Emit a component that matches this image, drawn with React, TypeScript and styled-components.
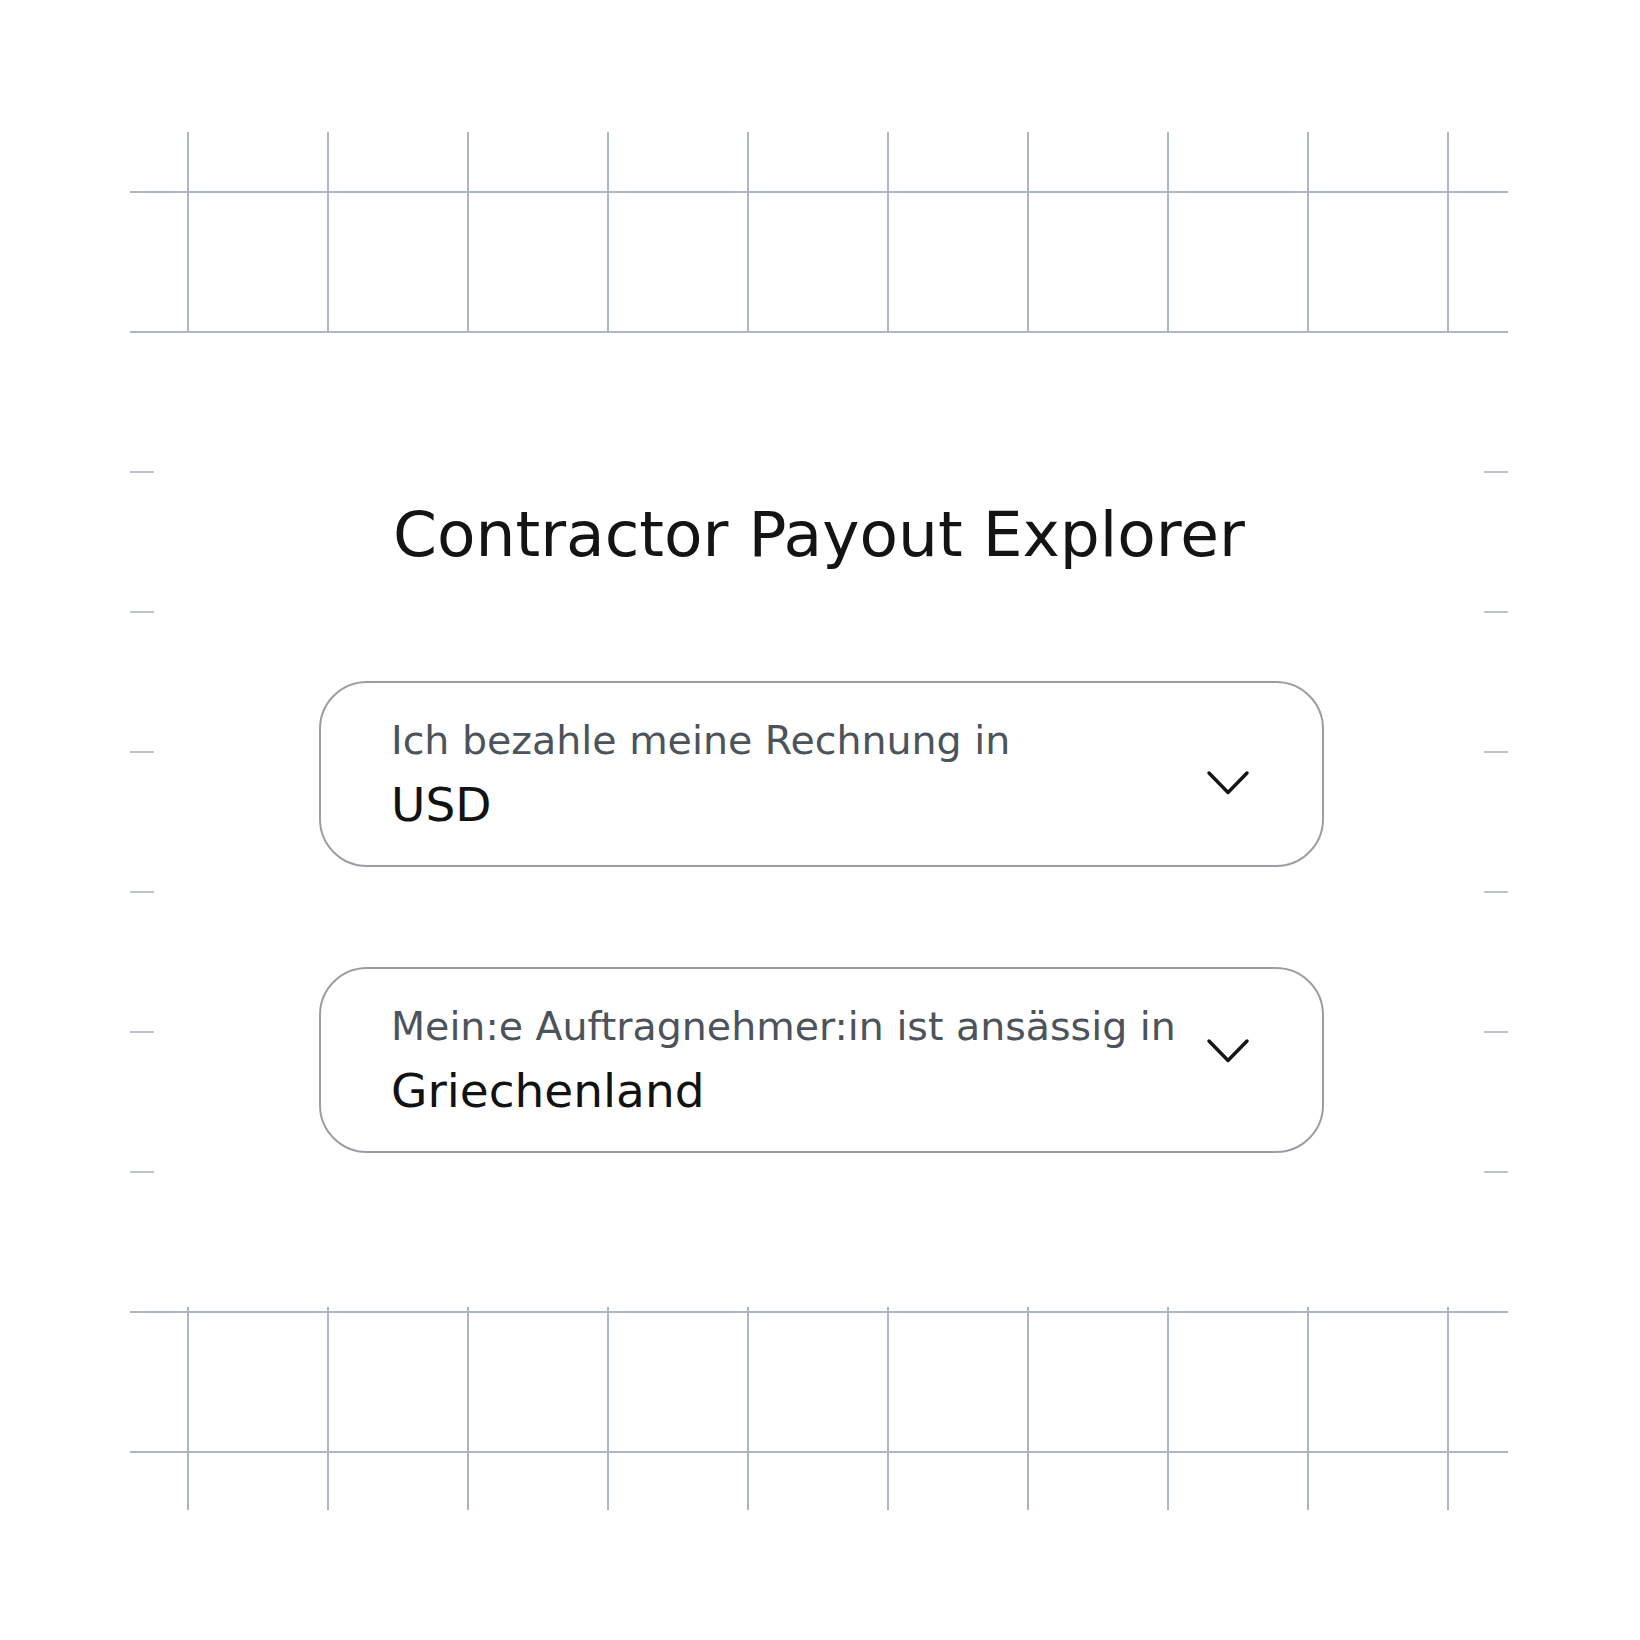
import React from "react";
import styled, { createGlobalStyle } from "styled-components";

const LINE = "#adb6c3";
const TICK = "#bcc3cd";

const GlobalStyle = createGlobalStyle`
  html, body {
    margin: 0;
    padding: 0;
    background: #ffffff;
  }
  body {
    font-family: "DejaVu Sans", "Inter", "Liberation Sans", sans-serif;
    -webkit-font-smoothing: antialiased;
  }
`;

const Page = styled.div`
  width: 1640px;
  height: 1640px;
  box-sizing: border-box;
  padding: 132px 132px 0 130px;
  background: #ffffff;
  display: flex;
  flex-direction: column;
`;

const GridBand = styled.div<{ $rowStart: number; $height: number }>`
  height: ${(p) => p.$height}px;
  background-image: linear-gradient(to right, ${LINE} 2px, transparent 2px),
    linear-gradient(to bottom, ${LINE} 2px, transparent 2px);
  background-size: 140px 100%, 100% 140px;
  background-position: 57px 0, 0 ${(p) => p.$rowStart}px;
  background-repeat: repeat-x, repeat-y;
`;

const Middle = styled.div`
  height: 974px;
  display: flex;
`;

const TickRail = styled.div`
  width: 24px;
  flex-shrink: 0;
  background-image: linear-gradient(to bottom, ${TICK} 2px, transparent 2px);
  background-size: 100% 140px;
  background-position: 0 138px;
  background-repeat: repeat-y;
`;

const Center = styled.div`
  flex: 1;
  display: flex;
  flex-direction: column;
  align-items: center;
  padding-top: 165px;
`;

const Title = styled.h1`
  margin: 0 0 109px;
  font-size: 63px;
  line-height: 74px;
  font-weight: 400;
  color: #141414;
`;

const Select = styled.div`
  width: 1005px;
  box-sizing: border-box;
  margin-left: 5px;
  border: 2px solid #999ea5;
  border-radius: 48px;
  padding: 34px 72px 33px 70px;
  display: flex;
  align-items: center;
  background: #ffffff;
  cursor: pointer;

  & + & {
    margin-top: 100px;
  }
`;

const Texts = styled.div`
  flex: 1;
  display: flex;
  flex-direction: column;
  gap: 15px;
`;

const Label = styled.span`
  font-size: 39.5px;
  line-height: 46px;
  color: #4d535b;
`;

const Value = styled.span`
  font-size: 47px;
  line-height: 54px;
  color: #121212;
`;

const Chevron = styled.svg<{ $shift: number }>`
  width: 44px;
  height: 26px;
  flex-shrink: 0;
  transform: translateY(${(p) => p.$shift}px);
`;

interface FieldProps {
  label: string;
  value: string;
  chevronShift?: number;
}

const SelectField: React.FC<FieldProps> = ({ label, value, chevronShift = 0 }) => (
  <Select>
    <Texts>
      <Label>{label}</Label>
      <Value>{value}</Value>
    </Texts>
    <Chevron $shift={chevronShift} viewBox="0 0 44 26" fill="none">
      <polyline
        points="3,3 22,22.5 41,3"
        stroke="#161616"
        strokeWidth="3.5"
        strokeLinecap="round"
        strokeLinejoin="round"
      />
    </Chevron>
  </Select>
);

export default function App() {
  return (
    <>
      <GlobalStyle />
      <Page>
        <GridBand $rowStart={59} $height={201} />
        <Middle>
          <TickRail />
          <Center>
            <Title>Contractor Payout Explorer</Title>
            <SelectField
              label="Ich bezahle meine Rechnung in"
              value="USD"
              chevronShift={8}
            />
            <SelectField
              label="Mein:e Auftragnehmer:in ist ansässig in"
              value="Griechenland"
              chevronShift={-10}
            />
          </Center>
          <TickRail />
        </Middle>
        <GridBand $rowStart={4} $height={203} />
      </Page>
    </>
  );
}
